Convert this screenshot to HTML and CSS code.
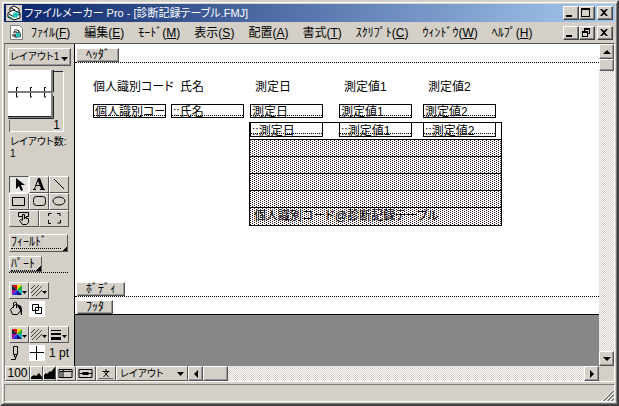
FILE: index.html
```html
<!DOCTYPE html>
<html lang="ja">
<head>
    <meta charset="UTF-8">
    <meta name="viewport" content="width=device-width, initial-scale=1.0">
    <title>ファイルメーカー Pro</title>
    <link rel="stylesheet" href="styles.css">
</head>
<body>
    <div class="window">
        <!-- タイトルバー -->
        <header class="title-bar">
            <svg class="app-icon" viewBox="0 0 16 16">
                <rect x="0" y="0" width="16" height="16" fill="#d4d0c8"/>
                <path d="M4 6V3l4-2 5 3v3M2 8l5-3 7 3v5l-6 2-6-3z" fill="#fff" stroke="#000"/>
                <path d="M5 3l4 2M3 9l5 3 6-3" fill="none" stroke="#000"/>
                <path d="M7 8l4-1 2 2-2 4-4-1z" fill="#1cc3bd"/>
                <path d="M2 11l5 3" stroke="#008080"/>
            </svg>
            <h1 class="title">ファイルメーカー Pro - [診断記録テーブル.FMJ]</h1>
            <div class="window-buttons">
                <button class="window-button" aria-label="最小化"><svg viewBox="0 0 12 10"><path d="M2 7h6v2H2z"/></svg></button>
                <button class="window-button" aria-label="最大化"><svg viewBox="0 0 12 10"><path d="M1 0h9v9H1zM2 2v6h7V2z" fill-rule="evenodd"/></svg></button>
                <button class="window-button close" aria-label="閉じる"><svg viewBox="0 0 12 10"><path d="M2 1h2l2 2 2-2h2L7 4.500l3 3.500H8L6 6 4 8H2l3-3.500z"/></svg></button>
            </div>
        </header>

        <!-- メニュー -->
        <nav class="menu-bar">
            <svg class="doc-icon" viewBox="0 0 13 15">
                <path d="M.5.5h9l3 3v11H.5z" fill="#fff" stroke="#808080"/>
                <path d="M3 8l2-4 4 1 2 4v3l-5 1-4-2z" fill="#555"/>
                <path d="M6 8h4v4H6z" fill="#1cc3bd"/>
                <path d="M3 9l3-1M5 5l3 2" stroke="#fff"/>
            </svg>
            <div class="menus">
                <a href="#">ﾌｧｲﾙ(<u>F</u>)</a>
                <a href="#">編集(<u>E</u>)</a>
                <a href="#">ﾓｰﾄﾞ(<u>M</u>)</a>
                <a href="#">表示(<u>S</u>)</a>
                <a href="#">配置(<u>A</u>)</a>
                <a href="#">書式(<u>T</u>)</a>
                <a href="#">ｽｸﾘﾌﾟﾄ(<u>C</u>)</a>
                <a href="#">ｳｨﾝﾄﾞｳ(<u>W</u>)</a>
                <a href="#">ﾍﾙﾌﾟ(<u>H</u>)</a>
            </div>
            <div class="window-buttons">
                <button class="window-button" aria-label="文書を最小化"><svg viewBox="0 0 12 10"><path d="M2 7h6v2H2z"/></svg></button>
                <button class="window-button" aria-label="文書を元に戻す"><svg viewBox="0 0 12 10"><path d="M4 0h6v6H8V5h1V2H5v1H4zM2 3h6v6H2zM3 5v3h4V5z" fill-rule="evenodd"/></svg></button>
                <button class="window-button close" aria-label="文書を閉じる"><svg viewBox="0 0 12 10"><path d="M2 1h2l2 2 2-2h2L7 4.500l3 3.500H8L6 6 4 8H2l3-3.500z"/></svg></button>
            </div>
        </nav>

        <main class="document">
            <div class="workspace">
                <!-- ステータスエリア -->
                <aside class="status-area">
                    <select class="layout-select" aria-label="レイアウト"><option>レイアウト1</option></select>
                    <div class="book">
                        <svg class="book-pages" viewBox="0 0 56 62">
                            <path d="M0 0h43v47H0z" fill="#fff"/>
                            <path d="M43 0h2v49H0v-3h43z" fill="#808080"/>
                            <path d="M0 22h45" stroke="#808080" stroke-width="2"/>
                            <path d="M45.500 0v22M45.500 26v22.500H1M0 46.500h43M46 1.500h9" fill="none" stroke="#222"/>
                            <path d="M1.500 50v12" stroke="#666"/>
                            <path d="M55.500 2v59.500H2" fill="none" stroke="#fff"/>
                            <path d="M10 17.500H8.500v4M8.500 23v4H10M24 17.500h-1.500v4M22.500 23v4H24M38 17.500h-1.500v4M36.500 23v4H38" fill="none" stroke="#000"/>
                        </svg>
                        <span class="book-number">1</span>
                    </div>
                    <p class="layout-count">レイアウト数:<br>1</p>

                    <div class="tools">
                        <button class="tool selected" aria-label="選択"><svg viewBox="0 0 18 15"><path d="M6 1v11l3-3 2 5 2-1-2-5h4z"/></svg></button>
                        <button class="tool" aria-label="文字"><svg viewBox="0 0 18 15"><path d="M8 1h2l4 11h1v1h-5v-1h1l-1-3H6l-1 3h1v1H3v-1h1zM8 4L6.500 8h3z" fill-rule="evenodd"/></svg></button>
                        <button class="tool" aria-label="線"><svg viewBox="0 0 18 15"><path d="M4 2l10 10" stroke="#000"/></svg></button>
                        <button class="tool" aria-label="四角形"><svg viewBox="0 0 18 15"><path d="M2.500 3.500h12v8h-12z" class="line"/></svg></button>
                        <button class="tool" aria-label="角丸四角形"><svg viewBox="0 0 18 15"><rect x="3.500" y="2.500" width="12" height="9" rx="3" class="line"/></svg></button>
                        <button class="tool" aria-label="円"><svg viewBox="0 0 18 15"><ellipse cx="9" cy="7" rx="6" ry="4" class="line"/></svg></button>
                        <button class="tool wide" aria-label="ボタン"><svg viewBox="0 0 28 15"><path d="M12 5.500H8.500v-4h10v4H16M12.500 9V3.500h2V8M14.500 6.500h2V8M16.500 7.500h2v4l-2 2h-4l-3-4 1-1 2 1" class="line"/></svg></button>
                        <button class="tool wide" aria-label="ポータル"><svg viewBox="0 0 28 15"><path d="M8.500 5V2.500h3M17 2.500h3V5M20.500 9v3h-3M11 12.500H8.500V9" class="line"/></svg></button>
                    </div>

                    <div class="insert-tools">
                        <button class="insert-button field-button"><span>ﾌｨｰﾙﾄﾞ</span></button>
                        <div class="part-line"><button class="insert-button part-button"><span>ﾊﾟｰﾄ</span></button></div>
                    </div>

                    <svg class="symbols">
                        <symbol id="palette" viewBox="0 0 18 15">
                            <path d="M2 2h5v5z" fill="#e00000"/><path d="M7 2h5L7 7z" fill="#ffd800"/>
                            <path d="M12 2v5H7z" fill="#18b020"/><path d="M12 7v5L7 7z" fill="#10b8c0"/>
                            <path d="M12 12H7V7z" fill="#101070"/><path d="M7 12H2l5-5z" fill="#2030f0"/>
                            <path d="M2 12V7h5z" fill="#a010a0"/><path d="M2 7V2l5 5z" fill="#102040"/>
                            <path d="M12 8h5l-2.500 3z"/>
                        </symbol>
                        <symbol id="pattern" viewBox="0 0 18 15">
                            <path d="M1 6l4-4M1 10l8-8M2 13L12 3M6 13l6-6" stroke="#000" stroke-dasharray="1 .5"/>
                            <path d="M12 8h5l-2.500 3z"/>
                        </symbol>
                    </svg>

                    <div class="paint fill">
                        <div class="paint-buttons">
                            <button class="tool" aria-label="塗りつぶし色"><svg><use href="#palette"/></svg></button>
                            <button class="tool" aria-label="塗りつぶしパターン"><svg><use href="#pattern"/></svg></button>
                        </div>
                        <div class="paint-state">
                            <svg class="paint-icon" viewBox="0 0 16 16"><path d="M1.500 8.500l5-5 6 5-4 5h-5zM4.500 7V2l1-1h1l1 1v5" class="line"/><path d="M8 3l4 2 1 3v6h-1l-1-5-2-3z"/></svg>
                            <svg class="sample" viewBox="0 0 16 16"><path d="M3.500 3.500h6v6h-6zM6.500 6.500h6v6h-6z" class="line"/></svg>
                        </div>
                    </div>
                    <div class="paint pen">
                        <div class="paint-buttons">
                            <button class="tool" aria-label="線の色"><svg><use href="#palette"/></svg></button>
                            <button class="tool" aria-label="線のパターン"><svg><use href="#pattern"/></svg></button>
                            <button class="tool" aria-label="線の太さ"><svg viewBox="0 0 18 15"><path d="M1 3h10v1H1zM1 6h10v2H1zM1 10h10v3H1zM12 8h5l-2.500 3z"/></svg></button>
                        </div>
                        <div class="paint-state">
                            <svg class="paint-icon" viewBox="0 0 16 16"><path d="M4.500 1.500h4v8h-4zM5.500 10v2h2v-2M6.500 12v2.500H2" class="line"/></svg>
                            <svg class="sample" viewBox="0 0 16 16"><path d="M1 7.500h14M7.500 1v14" stroke="#000"/></svg>
                            <span>1 pt</span>
                        </div>
                    </div>
                </aside>

                <!-- レイアウト編集エリア -->
                <section class="canvas">
                    <div class="part header-part"><button class="part-label">ﾍｯﾀﾞ</button></div>
                    <div class="part body-part">
                        <div class="objects">
                            <div class="columns headings">
                                <label for="code">個人識別コード</label>
                                <label for="name">氏名</label>
                                <label for="date">測定日</label>
                                <label for="value1">測定値1</label>
                                <label for="value2">測定値2</label>
                            </div>
                            <div class="columns">
                                <input class="field" id="code" value="個人識別コード" readonly>
                                <input class="field" id="name" value="::氏名" readonly>
                                <input class="field" id="date" value="測定日" readonly>
                                <input class="field" id="value1" value="測定値1" readonly>
                                <input class="field" id="value2" value="測定値2" readonly>
                            </div>
                            <div class="portal">
                                <div class="portal-row portal-fields">
                                    <input class="field" value="::測定日" aria-label="測定日" readonly>
                                    <input class="field" value="::測定値1" aria-label="測定値1" readonly>
                                    <input class="field" value="::測定値2" aria-label="測定値2" readonly>
                                </div>
                                <div class="portal-row"></div>
                                <div class="portal-row"></div>
                                <div class="portal-row"></div>
                                <div class="portal-row"></div>
                                <div class="portal-row">個人識別コード@診断記録テーブル</div>
                            </div>
                        </div>
                        <button class="part-label">ﾎﾞﾃﾞｨ</button>
                    </div>
                    <div class="part footer-part"><button class="part-label">ﾌｯﾀ</button></div>
                </section>

                <div class="scroll vertical">
                    <button class="scroll-button" aria-label="上へ"><svg viewBox="0 0 8 8"><path d="M0 6h8L4 2z"/></svg></button>
                    <div class="thumb"></div>
                    <button class="scroll-button last" aria-label="下へ"><svg viewBox="0 0 8 8"><path d="M0 2h8L4 6z"/></svg></button>
                </div>
            </div>

            <div class="bottom-bar">
                <button class="bar-button zoom">100</button>
                <button class="bar-button" aria-label="縮小"><svg viewBox="0 0 11 13"><path d="M0 12v-2l3-2 2 1 3-3 3 4v2z"/></svg></button>
                <button class="bar-button" aria-label="拡大"><svg viewBox="0 0 11 13"><path d="M0 12V8l2-2 1 1 3-3 1 1 4-5v12z"/></svg></button>
                <button class="bar-button wide" aria-label="ステータスエリア"><svg viewBox="0 0 17 13"><path d="M1.500 2.500h13v8h-13zM2 4.500h13M5.500 3v7" class="line"/><path d="M2 5h3v5H2z" fill="#777"/></svg></button>
                <button class="bar-button wide" aria-label="パートラベル"><svg viewBox="0 0 17 13"><path d="M1.500 2.500h13v8h-13zM2 6.500h13" class="line"/><path d="M5 5h6v3H5z"/></svg></button>
                <button class="bar-button wide" aria-label="文字の表示"><svg viewBox="0 0 17 13"><path d="M5 4.500h7M8.500 2v2M7 5l4 5M10.500 5L6 10" class="line"/><path d="M2 11.500h14" stroke="#000" stroke-dasharray="1 1"/></svg></button>
                <select class="mode-select" aria-label="モード"><option>レイアウト</option></select>
                <div class="scroll horizontal">
                    <button class="scroll-button" aria-label="左へ"><svg viewBox="0 0 8 8"><path d="M6 0v8L2 4z"/></svg></button>
                    <div class="thumb"></div>
                    <button class="scroll-button last" aria-label="右へ"><svg viewBox="0 0 8 8"><path d="M2 0v8l4-4z"/></svg></button>
                </div>
            </div>
        </main>

        <footer class="status-bar">
            <svg class="grip" viewBox="0 0 12 12"><path d="M0 12L12 0M4 12l8-8M8 12l4-4" stroke="#fff"/><path d="M1 12L12 1M2 12L12 2M5 12l7-7M6 12l6-6M9 12l3-3M10 12l2-2" stroke="#808080"/></svg>
        </footer>
    </div>
</body>
</html>
```
FILE: styles.css
```css
* {
    box-sizing: border-box;
}

body {
    margin: 0;
    font-family: "Liberation Sans", "Noto Sans CJK JP", sans-serif;
    font-size: 12px;
    line-height: 14px;
    color: #000;
}

button, input, select {
    font: inherit;
    color: inherit;
    padding: 0;
    margin: 0;
    border-radius: 0;
}

svg {
    display: block;
}

.line {
    fill: none;
    stroke: #000;
}

.symbols {
    display: none;
}

.window {
    height: 100vh;
    display: flex;
    flex-direction: column;
    padding: 2px;
    background: #d4d0c8;
    border: 2px solid;
    border-color: #d4d0c8 #404040 #404040 #d4d0c8;
    box-shadow: inset 1px 1px #fff, inset -1px -1px #808080;
}

/* タイトルとメニュー */
.title-bar {
    display: flex;
    align-items: center;
    height: 18px;
    padding: 0 2px;
    gap: 2px;
    background: linear-gradient(to right, #0a246a, #a6caf0);
    color: #fff;
}

.app-icon {
    width: 16px;
    height: 16px;
}

.title {
    flex: 1;
    margin: 0;
    font-size: 11px;
    font-weight: normal;
    font-feature-settings: "palt";
    white-space: nowrap;
}

.window-buttons {
    display: flex;
}

.window-button {
    width: 16px;
    height: 14px;
    border: 1px solid;
    border-color: #fff #404040 #404040 #fff;
    box-shadow: inset -1px -1px #808080;
    background: #d4d0c8;
}

.window-button.close {
    margin-left: 2px;
}

.window-button svg {
    width: 12px;
    height: 10px;
}

.menu-bar {
    display: flex;
    align-items: center;
    height: 21px;
    padding: 0 2px 0 6px;
    gap: 8px;
}

.doc-icon {
    width: 13px;
    height: 15px;
}

.menus {
    flex: 1;
    display: flex;
    gap: 14px;
    white-space: nowrap;
}

.menus a {
    color: #000;
    text-decoration: none;
}

/* 文書ウィンドウ */
.document {
    flex: 1;
    min-height: 0;
    display: flex;
    flex-direction: column;
    border: 1px solid;
    border-color: #555 #fff #fff #808080;
}

.workspace {
    flex: 1;
    min-height: 0;
    display: flex;
}

.status-area {
    width: 70px;
    flex-shrink: 0;
    padding: 4px 3px 0;
    border-right: 1px solid #000;
    overflow: hidden;
}

.layout-select, .mode-select {
    appearance: none;
    border: 1px solid;
    border-color: #fff #555 #555 #fff;
    background: #d4d0c8 url("data:image/svg+xml,%3Csvg xmlns='http://www.w3.org/2000/svg' width='7' height='4'%3E%3Cpath d='M0 0h7L3.500 4z'/%3E%3C/svg%3E") no-repeat right 3px center;
    font-feature-settings: "palt";
    font-size: 10px;
}

.layout-select {
    display: block;
    width: 100%;
    height: 18px;
    padding-left: 1px;
    background-position: right 2px bottom 4px;
    box-shadow: inset -1px -1px #999;
}

.book {
    display: grid;
    width: 56px;
    height: 62px;
    margin-top: 4px;
}

.book-pages, .book-number {
    grid-area: 1 / 1;
}

.book-pages {
    width: 56px;
    height: 62px;
}

.book-number {
    place-self: end;
    padding-right: 4px;
}

.layout-count {
    margin: 4px 0 16px 2px;
    font-size: 10px;
    line-height: 12px;
    font-feature-settings: "palt";
    white-space: nowrap;
}

.tools {
    display: grid;
    grid-template-columns: repeat(6, 10px);
    margin-left: 1px;
}

.tool {
    grid-column: span 2;
    min-width: 20px;
    height: 17px;
    border: 1px solid;
    border-color: #fff #555 #555 #fff;
    background: #d4d0c8;
}

.tool.wide {
    grid-column: span 3;
}

.tool svg {
    width: 18px;
    height: 15px;
}

.tool.wide svg {
    width: 28px;
}

.tool.selected {
    border-color: #555 #fff #fff #555;
    background: #e9e7e3;
}

.insert-tools {
    display: grid;
    gap: 4px;
    margin: 7px 3px 9px 1px;
}

.insert-button {
    display: flex;
    height: 18px;
    padding: 0 1px;
    border: 1px solid;
    border-color: #fff #555 #555 #fff;
    background: linear-gradient(135deg, transparent 50%, #000 50%) no-repeat right bottom / 5px 5px #d4d0c8;
    white-space: nowrap;
}

.insert-button span {
    flex: 1;
    height: 14px;
    margin-right: 5px;
    text-align: left;
    border-bottom: 1px dotted #000;
}

.part-button {
    width: 33px;
    height: 16px;
}

.part-line {
    border-bottom: 1px dotted #000;
}

.paint.pen {
    margin-top: 8px;
}

.paint {
    margin-left: 1px;
}

.paint-buttons, .paint-state {
    display: flex;
}

.paint-state {
    height: 19px;
    align-items: center;
    gap: 4px;
    white-space: nowrap;
}

.paint-icon {
    width: 16px;
    height: 16px;
}

.sample {
    width: 16px;
    height: 16px;
    background: #fff;
}

/* レイアウト */
.canvas {
    flex: 1;
    min-width: 0;
    display: flex;
    flex-direction: column;
    background: #878787;
    overflow: hidden;
}

.part {
    display: flex;
    flex-direction: column;
    align-items: flex-start;
    justify-content: flex-end;
    padding-left: 2px;
    background: #fff;
    border-bottom: 1px dotted #000;
}

.header-part {
    height: 19px;
}

.body-part {
    height: 234px;
}

.footer-part {
    height: 18px;
    border-bottom-style: solid;
}

.part-label {
    height: 14px;
    padding: 0 8px;
    line-height: 12px;
    border: 1px solid;
    border-color: #fff #555 #555 #d4d0c8;
    box-shadow: inset -1px -1px #999;
    background: #d4d0c8;
}

.objects {
    flex: 1;
    padding: 17px 0 0 16px;
}

.columns {
    display: grid;
    grid-template-columns: 78px 79px 89px 84px 73px;
    padding-left: 2px;
}

.headings {
    margin-bottom: 10px;
    padding-left: 0;
    white-space: nowrap;
    font-feature-settings: "palt";
}

.columns:not(.headings) {
    padding-left: 0;
}

.headings label {
    padding-left: 5px;
}

.headings label:first-child {
    padding-left: 0;
}

.headings label:nth-child(2) {
    padding-left: 9px;
}

.field {
    width: 73px;
    height: 14px;
    padding: 0 1px 1px;
    border: 1px solid #000;
    outline: none;
    line-height: 11px;
    font-feature-settings: "palt";
    background: repeating-linear-gradient(to right, #000 0 1px, transparent 1px 2px) no-repeat 0 10px / 100% 1px #fff;
}

.portal {
    width: 253px;
    margin: 4px 0 0 156px;
    border: 1px solid #000;
}

.portal-row {
    height: 17px;
    padding-left: 4px;
    line-height: 16px;
    border-bottom: 1px solid #000;
    font-feature-settings: "palt";
    background-color: #fff;
    background-image: linear-gradient(#301018, #301018), linear-gradient(#301018, #301018);
    background-repeat: space;
    background: conic-gradient(from 270deg at 1px 1px, #301018 25%, transparent 0) 0 0 / 4px 2px,
        conic-gradient(from 270deg at 1px 1px, #301018 25%, transparent 0) 2px 1px / 4px 2px,
        #fff;
}

.portal-row:last-child {
    border-bottom: none;
}

.portal-fields {
    display: grid;
    grid-template-columns: 89px 84px 73px;
    padding: 0;
    background: #fff;
}

.portal-fields .field {
    border-top: none;
}

/* スクロールバー */
.scroll {
    display: flex;
    background: repeating-conic-gradient(#fff 0 25%, #d4d0c8 0 50%) 0 0 / 2px 2px;
}

.vertical {
    flex-direction: column;
    width: 15px;
}

.horizontal {
    flex: 1;
    margin-right: 15px;
}

.scroll-button, .thumb {
    flex-shrink: 0;
    width: 15px;
    height: 15px;
    border: 1px solid;
    border-color: #fff #555 #555 #fff;
    box-shadow: inset -1px -1px #999;
    background: #d4d0c8;
}

.scroll-button svg {
    width: 8px;
    height: 8px;
    margin: 0 auto;
}

.scroll-button.last {
    margin-left: auto;
}

.vertical .last {
    margin-top: auto;
}

.vertical .thumb {
    height: 12px;
}

.horizontal .thumb {
    width: 25px;
}

.bottom-bar {
    display: flex;
    height: 15px;
    background: #d4d0c8;
}

.bar-button {
    width: 13px;
    flex-shrink: 0;
    border: 1px solid;
    border-color: #fff #555 #555 #fff;
    background: #d4d0c8;
    line-height: 13px;
}

.bar-button.zoom {
    width: 25px;
}

.bar-button.wide {
    width: 20px;
}

.bar-button svg {
    width: 100%;
    height: 13px;
}

.mode-select {
    width: 72px;
    padding-left: 3px;
}

.status-bar {
    display: flex;
    justify-content: flex-end;
    align-items: flex-end;
    height: 18px;
    margin: 2px 0 0;
    border: 1px solid;
    border-color: #808080 #fff #fff #808080;
}

.grip {
    width: 12px;
    height: 12px;
}
```
